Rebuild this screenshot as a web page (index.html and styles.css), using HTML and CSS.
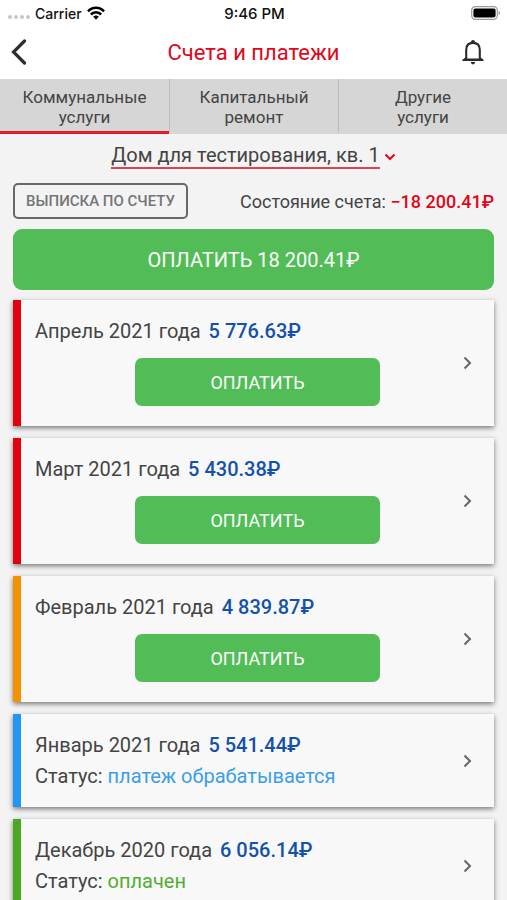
FILE: index.html
```html
<!DOCTYPE html>
<html lang="ru">
<head>
<meta charset="utf-8">
<meta name="viewport" content="width=device-width, initial-scale=1">
<title>Счета и платежи</title>
<link rel="stylesheet" href="styles.css">
</head>
<body>
<div class="screen">
  <div class="status-bar">
    <div class="carrier">
      <span class="signal"><i></i><i></i><i></i><i></i></span>
      <span>Carrier</span>
      <svg class="wifi" viewBox="0 0 18 14" width="18" height="14" aria-hidden="true">
        <g fill="none" stroke="#000" stroke-width="2.600">
          <path d="M1 5.400C5.400.5 12.600.5 17 5.400"/>
          <path d="M3.900 8.500C6.700 5.500 11.300 5.500 14.100 8.500"/>
        </g>
        <path d="M6.200 10.700C7.800 9.100 10.200 9.100 11.800 10.700L9 13.700Z"/>
      </svg>
    </div>
    <span class="clock">9:46 PM</span>
    <svg class="battery" viewBox="0 0 30 14" width="30" height="14" aria-hidden="true">
      <rect x=".7" y=".7" width="25.600" height="12.600" rx="3.600" fill="#fff" stroke="#9b9b9b" stroke-width="1.200"/>
      <rect x="2.400" y="2.400" width="22.200" height="9.200" rx="2"/>
      <path d="M27.700 4.800Q30.300 7 27.700 9.200Z" fill="#8a8a8a"/>
    </svg>
  </div>

  <header class="header">
    <button class="icon-button" type="button" aria-label="Назад">
      <svg viewBox="0 0 16 26" width="16" height="26"><path d="M13.500 2L2.500 13L13.500 24" fill="none" stroke="#2e2e2e" stroke-width="3.200" stroke-linecap="round"/></svg>
    </button>
    <h1>Счета и платежи</h1>
    <button class="icon-button bell" type="button" aria-label="Уведомления">
      <svg viewBox="0 0 22 26" width="22" height="26">
        <path d="M4.200 20V11C4.200 6.500 6.700 3.900 11 3.900S17.800 6.500 17.800 11V20" fill="none" stroke="#2b2b2b" stroke-width="2.100"/>
        <path d="M8.800 4.500L9.200 1.900Q11 0 12.800 1.900L13.200 4.500ZM.4 21.900V20.800L3.400 18.400L4.500 19.600H17.500L18.600 18.400L21.600 20.800V21.900ZM8.800 23H13.200Q12.900 25.400 11 25.400T8.800 23Z" fill="#2b2b2b"/>
      </svg>
    </button>
  </header>

  <nav class="tabs">
    <a class="tab tab-active" href="#communal" aria-current="page">Коммунальные<br>услуги</a>
    <a class="tab" href="#repair">Капитальный<br>ремонт</a>
    <a class="tab" href="#other">Другие<br>услуги</a>
  </nav>

  <main class="content">
    <button class="address" type="button">
      <span class="address-text">Дом для тестирования, кв. 1</span>
      <svg viewBox="0 0 12 8" width="12" height="8" aria-hidden="true"><path d="M1.500 1.500L6 6L10.500 1.500" fill="none" stroke="#e1061a" stroke-width="2"/></svg>
    </button>

    <div class="account">
      <button class="statement" type="button">ВЫПИСКА ПО СЧЕТУ</button>
      <p class="balance">Состояние счета: <strong>−18 200.41₽</strong></p>
    </div>

    <button class="pay pay-all" type="button">ОПЛАТИТЬ 18 200.41₽</button>

    <article class="card due">
      <div class="card-body">
        <h2>Апрель 2021 года <span class="sum">5 776.63₽</span></h2>
        <button class="pay pay-month" type="button">ОПЛАТИТЬ</button>
      </div>
      <a class="more" href="#april" aria-label="Апрель 2021"><svg viewBox="0 0 9 14" width="9" height="14"><path d="M1.500 1.500L7 7L1.500 12.500"/></svg></a>
    </article>
    <article class="card due">
      <div class="card-body">
        <h2>Март 2021 года <span class="sum">5 430.38₽</span></h2>
        <button class="pay pay-month" type="button">ОПЛАТИТЬ</button>
      </div>
      <a class="more" href="#march" aria-label="Март 2021"><svg viewBox="0 0 9 14" width="9" height="14"><path d="M1.500 1.500L7 7L1.500 12.500"/></svg></a>
    </article>
    <article class="card partial">
      <div class="card-body">
        <h2>Февраль 2021 года <span class="sum">4 839.87₽</span></h2>
        <button class="pay pay-month" type="button">ОПЛАТИТЬ</button>
      </div>
      <a class="more" href="#february" aria-label="Февраль 2021"><svg viewBox="0 0 9 14" width="9" height="14"><path d="M1.500 1.500L7 7L1.500 12.500"/></svg></a>
    </article>
    <article class="card pending">
      <div class="card-body">
        <h2>Январь 2021 года <span class="sum">5 541.44₽</span></h2>
        <p>Статус: <span class="state">платеж обрабатывается</span></p>
      </div>
      <a class="more" href="#january" aria-label="Январь 2021"><svg viewBox="0 0 9 14" width="9" height="14"><path d="M1.500 1.500L7 7L1.500 12.500"/></svg></a>
    </article>
    <article class="card paid">
      <div class="card-body">
        <h2>Декабрь 2020 года <span class="sum">6 056.14₽</span></h2>
        <p>Статус: <span class="state">оплачен</span></p>
      </div>
      <a class="more" href="#december" aria-label="Декабрь 2020"><svg viewBox="0 0 9 14" width="9" height="14"><path d="M1.500 1.500L7 7L1.500 12.500"/></svg></a>
    </article>
  </main>
</div>
</body>
</html>
```
FILE: styles.css
```css
* {
  box-sizing: border-box;
}

body,
h1,
h2,
p {
  margin: 0;
  font-weight: 400;
}

body {
  font-family: Roboto, "Liberation Sans", sans-serif;
  color: #444;
  background: #f3f3f3;
}

button {
  padding: 0;
  border: 0;
  background: none;
  font-family: inherit;
  color: inherit;
}

a {
  color: inherit;
  text-decoration: none;
}

svg {
  display: block;
}

.screen {
  display: flex;
  flex-direction: column;
  height: 100vh;
}

.status-bar {
  display: grid;
  grid-template-columns: 1fr auto 1fr;
  align-items: center;
  height: 26px;
  padding: 0 6px 0 8px;
  background: #fff;
  color: #111;
  font: 500 14px Inter, "Liberation Sans", sans-serif;
}

.clock {
  font-size: 15px;
}

.carrier {
  display: flex;
  align-items: center;
  gap: 5px;
}

.signal {
  display: flex;
  gap: 2px;
  padding-top: 8px;
}

.signal i {
  width: 4px;
  height: 4px;
  border-radius: 50%;
  background: #c6c6c6;
}

.battery {
  justify-self: end;
}

.header {
  display: grid;
  grid-template-columns: 1fr auto 1fr;
  align-items: center;
  height: 53px;
  padding: 0 11px 1px;
  background: #fff;
}

.header h1 {
  font-size: 22px;
  color: #e1061a;
}

.bell {
  justify-self: end;
  padding-right: 12px;
}

.tabs {
  display: grid;
  grid-template-columns: repeat(3, 1fr);
  flex: none;
  background: #d6d6d6;
}

.tab {
  padding: 8px 0 4px;
  border-bottom: 3px solid transparent;
  font-size: 17px;
  line-height: 20px;
  text-align: center;
}

.tab + .tab {
  border-left: 1px solid #bcbcbc;
}

.tab-active {
  border-bottom-color: #d9202c;
}

.content {
  display: flex;
  flex: 1;
  flex-direction: column;
  min-height: 0;
  padding: 10px 13px 12px;
  overflow-y: auto;
  scrollbar-width: none;
}

.content > * {
  flex: none;
}

.address {
  display: flex;
  align-items: center;
  align-self: center;
  gap: 4px;
  font-size: 20px;
  line-height: 23px;
}

.address-text {
  border-bottom: 2px solid #d94352;
}

.account {
  display: flex;
  align-items: center;
  justify-content: space-between;
  margin: 14px 0 10px;
}

.statement {
  height: 36px;
  padding: 0 11px;
  border: 2px solid #686868;
  border-radius: 5px;
  font-size: 15px;
  font-weight: 500;
  color: #757575;
}

.balance {
  font-size: 18px;
}

.balance strong {
  font-weight: 500;
  color: #e1061a;
}

.pay {
  background: #52bd57;
  color: #fff;
  font-size: 20px;
}

.pay-all {
  height: 61px;
  margin-bottom: 10px;
  border-radius: 9px;
}

.pay-month {
  align-self: center;
  width: 55%;
  height: 48px;
  margin: 11px 0 4px;
  border-radius: 7px;
  font-size: 18px;
}

.card {
  display: grid;
  align-items: center;
  margin-bottom: 12px;
  border-left: 8px solid;
  background: #f8f8f8;
  box-shadow: 0 2px 5px rgba(0, 0, 0, 0.5);
}

.card-body,
.more {
  grid-area: 1 / 1;
}

.card-body {
  display: flex;
  flex-direction: column;
  gap: 1px;
  padding: 16px 14px;
  font-size: 20px;
  line-height: 30px;
}

.card h2 {
  font-size: 20px;
}

.sum {
  margin-left: 3px;
  font-weight: 500;
  color: #1452a8;
}

.more {
  justify-self: end;
  padding: 8px 22px;
}

.more path {
  fill: none;
  stroke: #666;
  stroke-width: 2;
}

.due {
  border-color: #e3000f;
}

.partial {
  border-color: #f39200;
}

.pending {
  border-color: #2196f3;
}

.pending .state {
  color: #3b9eea;
}

.paid {
  border-color: #4aa823;
}

.paid .state {
  color: #53ad31;
}

.card h2,
.card p {
  color: #444;
}
```
